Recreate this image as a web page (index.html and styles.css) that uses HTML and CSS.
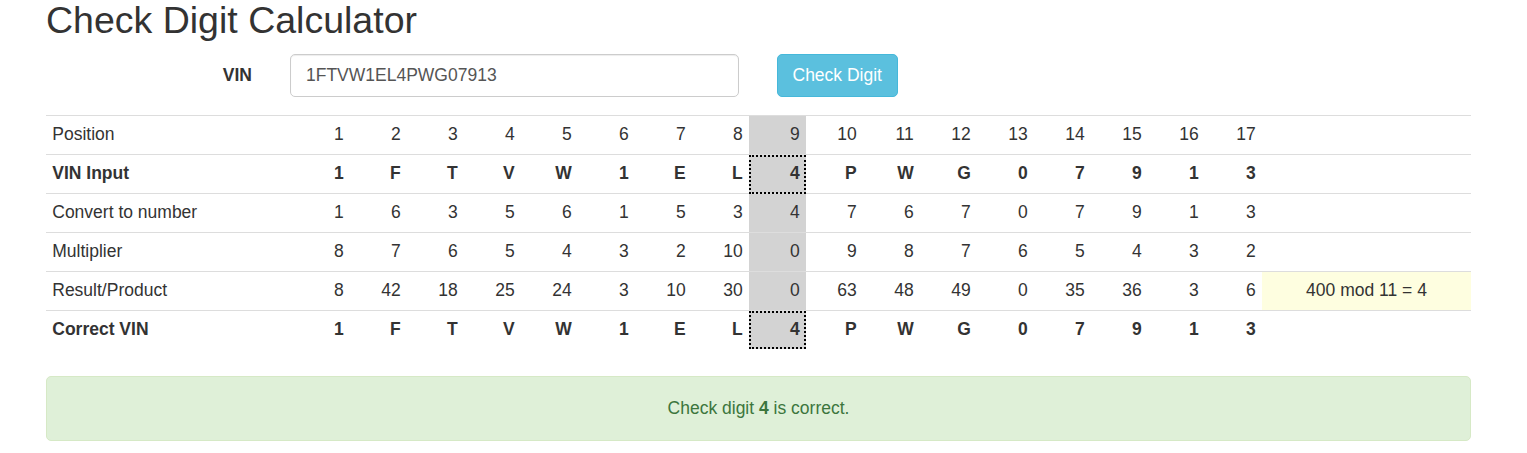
FILE: index.html
```html
<!DOCTYPE html>
<html lang="en">
<head>
<meta charset="utf-8">
<title>Check Digit Calculator</title>
<link rel="stylesheet" href="styles.css">
</head>
<body>
<div class="container">
  <h2 class="title">Check Digit Calculator</h2>
  <form class="vin-form">
    <label class="vin-label" for="vin">VIN</label>
    <input class="vin-input" id="vin" type="text" value="1FTVW1EL4PWG07913">
    <button class="btn-info" type="button">Check Digit</button>
  </form>
  <table class="calc">
    <colgroup>
      <col class="c-label">
      <col class="c-num"><col class="c-num"><col class="c-num"><col class="c-num"><col class="c-num"><col class="c-num"><col class="c-num"><col class="c-num"><col class="c-num"><col class="c-num"><col class="c-num"><col class="c-num"><col class="c-num"><col class="c-num"><col class="c-num"><col class="c-num"><col class="c-num">
      <col class="c-mod">
    </colgroup>
    <tbody>
      <tr>
        <td class="lbl">Position</td>
        <td>1</td><td>2</td><td>3</td><td>4</td><td>5</td><td>6</td><td>7</td><td>8</td><td class="chk">9</td><td>10</td><td>11</td><td>12</td><td>13</td><td>14</td><td>15</td><td>16</td><td>17</td>
        <td class="mod"></td>
      </tr>
      <tr class="strong">
        <td class="lbl">VIN Input</td>
        <td>1</td><td>F</td><td>T</td><td>V</td><td>W</td><td>1</td><td>E</td><td>L</td><td class="chk dotted">4</td><td>P</td><td>W</td><td>G</td><td>0</td><td>7</td><td>9</td><td>1</td><td>3</td>
        <td class="mod"></td>
      </tr>
      <tr>
        <td class="lbl">Convert to number</td>
        <td>1</td><td>6</td><td>3</td><td>5</td><td>6</td><td>1</td><td>5</td><td>3</td><td class="chk">4</td><td>7</td><td>6</td><td>7</td><td>0</td><td>7</td><td>9</td><td>1</td><td>3</td>
        <td class="mod"></td>
      </tr>
      <tr>
        <td class="lbl">Multiplier</td>
        <td>8</td><td>7</td><td>6</td><td>5</td><td>4</td><td>3</td><td>2</td><td>10</td><td class="chk">0</td><td>9</td><td>8</td><td>7</td><td>6</td><td>5</td><td>4</td><td>3</td><td>2</td>
        <td class="mod"></td>
      </tr>
      <tr>
        <td class="lbl">Result/Product</td>
        <td>8</td><td>42</td><td>18</td><td>25</td><td>24</td><td>3</td><td>10</td><td>30</td><td class="chk">0</td><td>63</td><td>48</td><td>49</td><td>0</td><td>35</td><td>36</td><td>3</td><td>6</td>
        <td class="mod sum">400 mod 11 = 4</td>
      </tr>
      <tr class="strong">
        <td class="lbl">Correct VIN</td>
        <td>1</td><td>F</td><td>T</td><td>V</td><td>W</td><td>1</td><td>E</td><td>L</td><td class="chk dotted">4</td><td>P</td><td>W</td><td>G</td><td>0</td><td>7</td><td>9</td><td>1</td><td>3</td>
        <td class="mod"></td>
      </tr>
    </tbody>
  </table>
  <div class="alert-success">Check digit <strong>4</strong> is correct.</div>
</div>
</body>
</html>
```

FILE: styles.css
```css
* {
  box-sizing: border-box;
}

body {
  margin: 0;
  font-family: "Liberation Sans", Arial, Helvetica, sans-serif;
  font-size: 17.5px;
  line-height: 25px;
  color: #333;
  background: #fff;
}

.container {
  width: 1425px;
  margin-left: 46px;
}

.title {
  margin: 0;
  font-size: 37.5px;
  font-weight: normal;
  line-height: 1.1;
  color: #333;
}

.vin-form {
  display: flex;
  align-items: center;
  margin-top: 12.75px;
  height: 42.5px;
}

.vin-label {
  width: 206px;
  text-align: right;
  font-weight: bold;
  margin-right: 38px;
}

.vin-input {
  width: 449px;
  height: 42.5px;
  padding: 7.5px 15px;
  font-family: inherit;
  font-size: 17.5px;
  line-height: 25px;
  color: #555;
  background: #fff;
  border: 1px solid #ccc;
  border-radius: 5px;
  box-shadow: inset 0 1px 1px rgba(0, 0, 0, .075);
  margin-right: 37.5px;
}

.btn-info {
  width: 121.5px;
  height: 42.5px;
  padding: 7.5px 15px;
  font-family: inherit;
  font-size: 17.5px;
  line-height: 25px;
  color: #fff;
  background: #5bc0de;
  border: 1px solid #46b8da;
  border-radius: 5px;
}

.calc {
  width: 1425px;
  margin-top: 18.5px;
  table-layout: fixed;
  border-collapse: collapse;
  border-spacing: 0;
}

.c-label { width: 247px; }
.c-num { width: 57px; }
.c-mod { width: 209px; }

.calc td {
  padding: 6.25px 6.25px 6.75px;
  border-top: 1px solid #ddd;
  text-align: right;
  vertical-align: top;
  line-height: 25px;
}

.calc td.lbl {
  text-align: left;
}

.calc td.mod {
  text-align: center;
}

.calc td.sum {
  background: #fefee0;
}

.calc td.chk {
  background: #d3d3d3;
}

.calc td.dotted {
  outline: 2px dotted #000;
  outline-offset: -2px;
}

.strong td {
  font-weight: bold;
}

.alert-success {
  margin-top: 27px;
  padding: 18.75px;
  text-align: center;
  color: #3c763d;
  background: #dff0d8;
  border: 1px solid #d6e9c6;
  border-radius: 5px;
}
```
